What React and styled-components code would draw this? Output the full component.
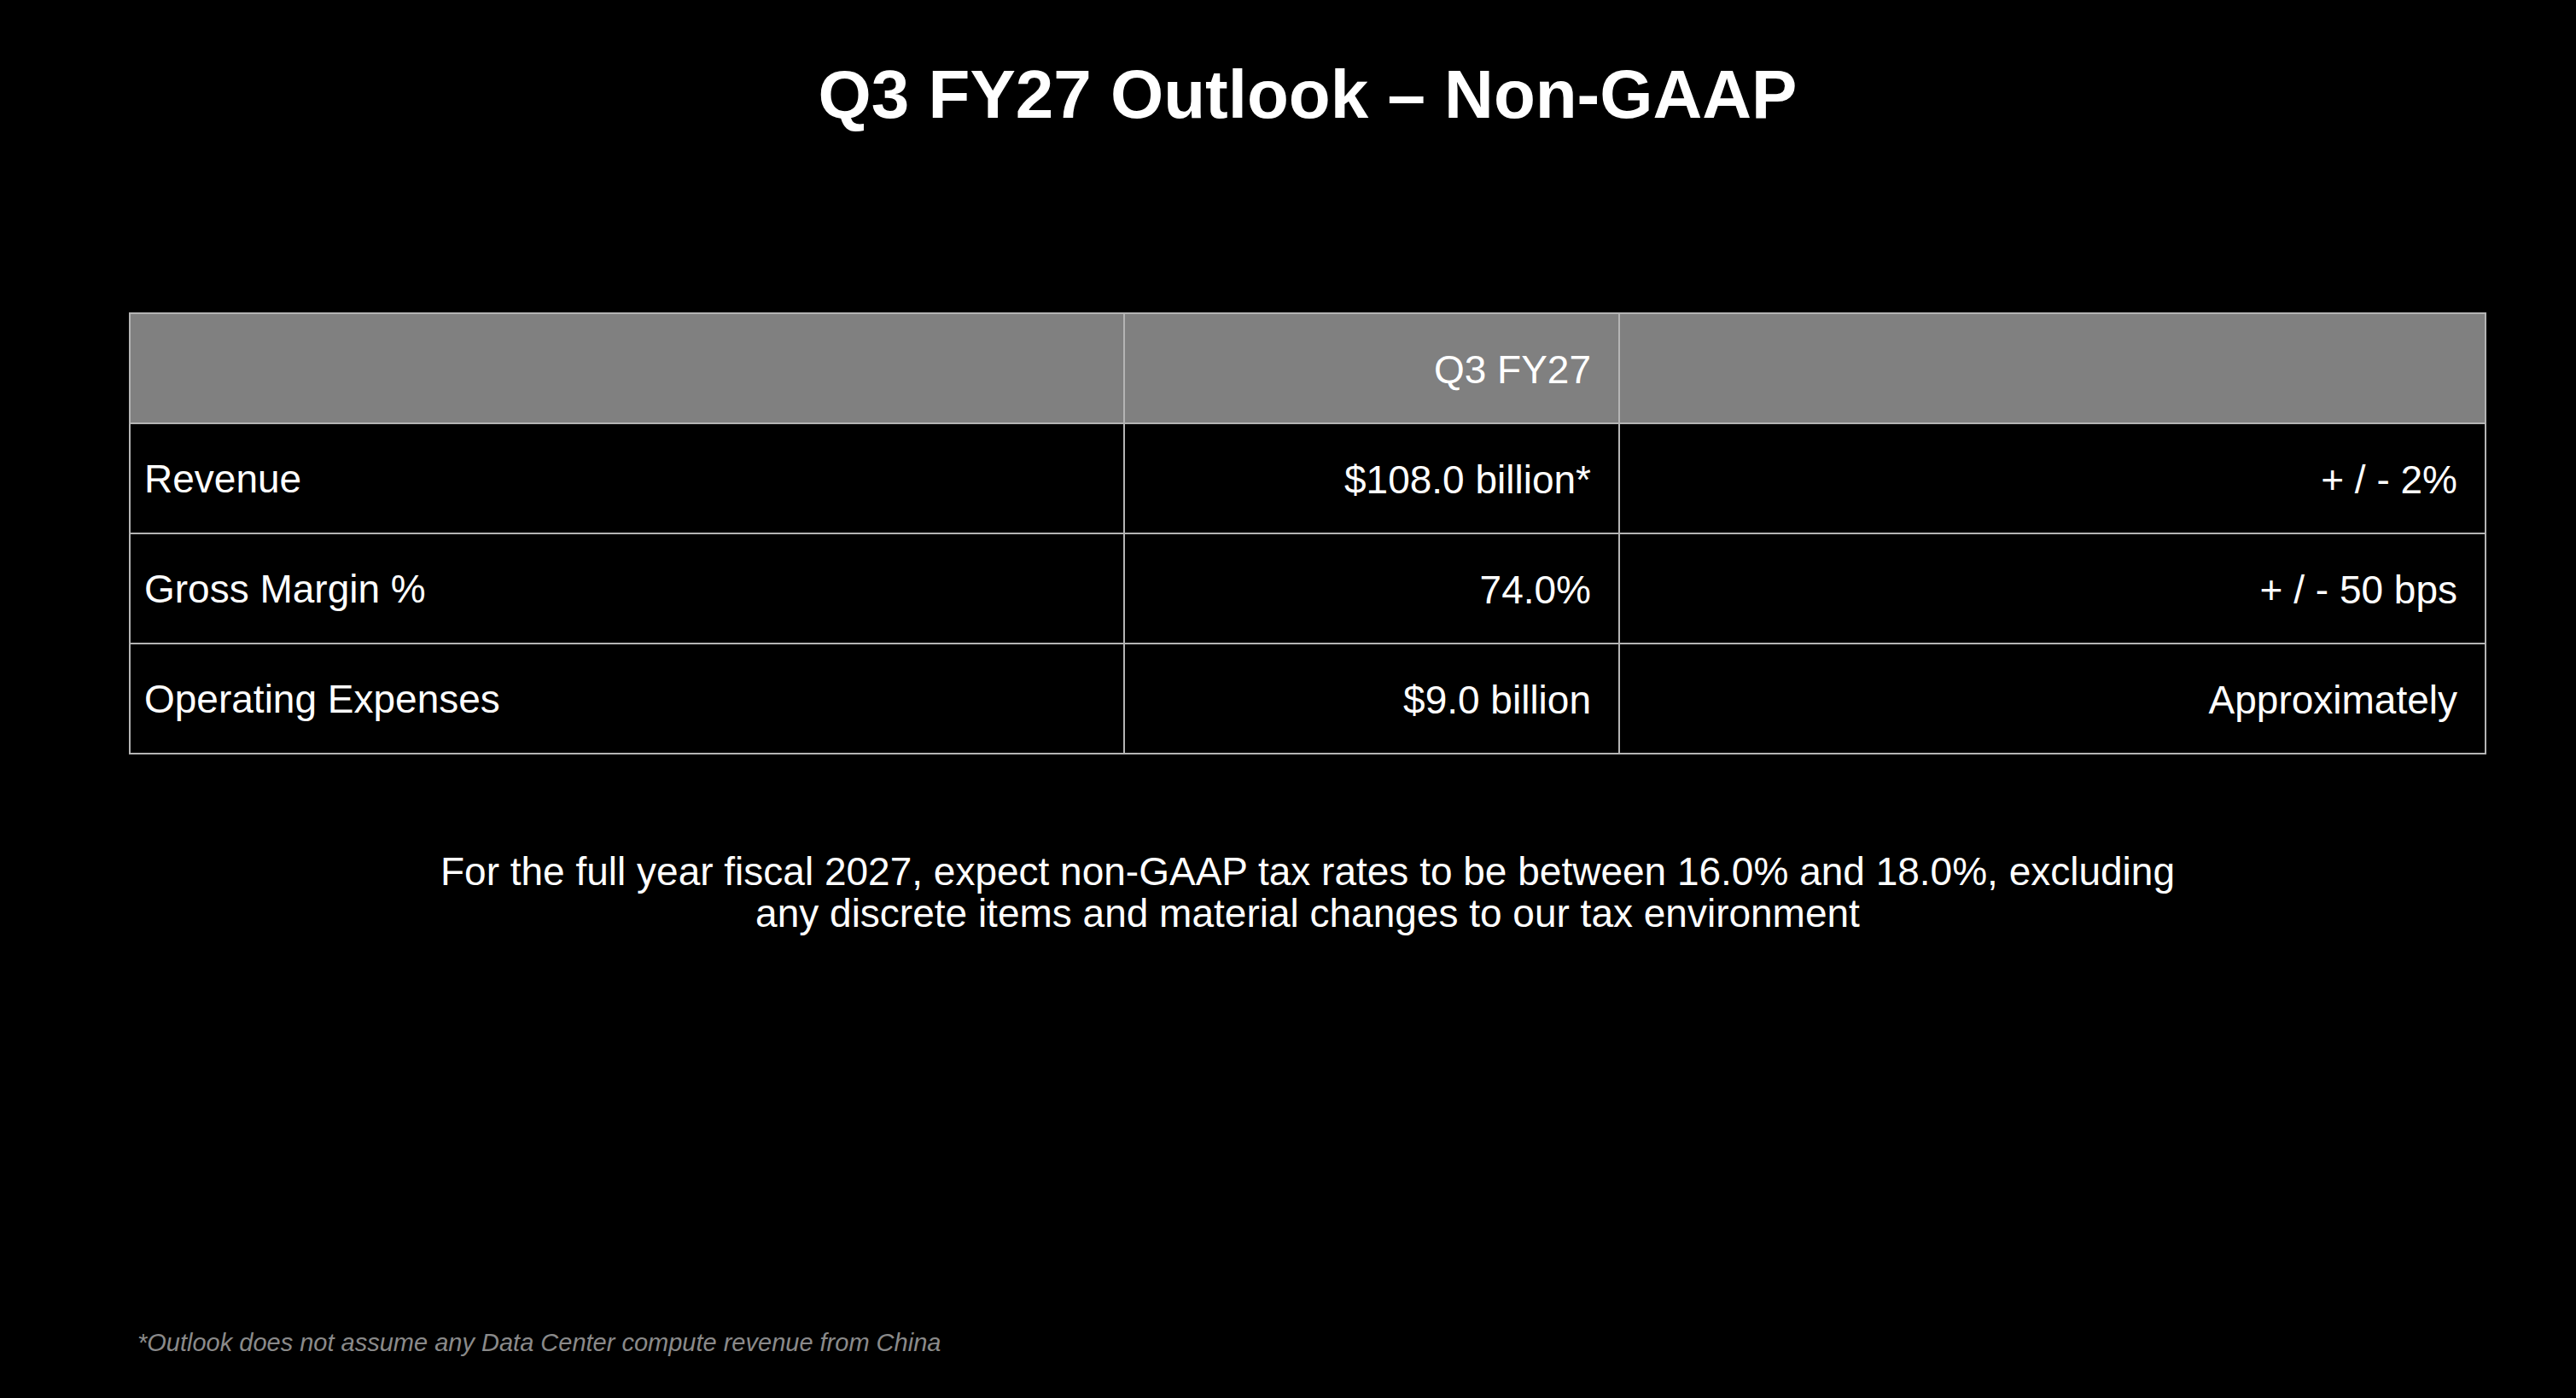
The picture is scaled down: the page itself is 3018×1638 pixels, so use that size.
import styled, { createGlobalStyle } from 'styled-components';

const Global = createGlobalStyle`
  html, body {
    margin: 0;
    padding: 0;
    background: #000;
  }
  body {
    font-family: "Liberation Sans", Arial, sans-serif;
    color: #fff;
  }
`;

const Slide = styled.div`
  width: 3018px;
  height: 1638px;
  box-sizing: border-box;
  padding: 64px 0 48px 151px;
  display: flex;
  flex-direction: column;
  background: #000;
`;

const Content = styled.div`
  width: 2762px;
  display: flex;
  flex-direction: column;
  flex: 1;
`;

const Title = styled.h1`
  margin: 0;
  font-size: 80px;
  font-weight: 700;
  line-height: 94px;
  text-align: center;
  color: #fff;
`;

const Grid = styled.div`
  margin-top: 208px;
  display: grid;
  grid-template-columns: 1163px 578px 1013px;
  grid-auto-rows: 127px;
  gap: 2px;
  padding: 2px;
  background: #b4b4b4;
`;

const Cell = styled.div`
  display: flex;
  align-items: center;
  justify-content: ${(p) => (p.$right ? 'flex-end' : 'flex-start')};
  padding: ${(p) => (p.$right ? '3px 32px 0 0' : '0 0 0 16px')};
  background: ${(p) => (p.$head ? '#808080' : '#000')};
  font-size: 46px;
  color: #fff;
  white-space: nowrap;
`;

const Note = styled.p`
  margin: 113px 0 0;
  font-size: 46px;
  line-height: 49px;
  text-align: center;
  color: #fff;
`;

const Footnote = styled.p`
  margin: auto 0 0;
  padding-left: 10px;
  font-size: 29px;
  font-style: italic;
  line-height: 34px;
  color: #8a8a8a;
`;

const rows = [
  ['Revenue', '$108.0 billion*', '+ / - 2%'],
  ['Gross Margin %', '74.0%', '+ / - 50 bps'],
  ['Operating Expenses', '$9.0 billion', 'Approximately'],
];

export default function App() {
  return (
    <>
      <Global />
      <Slide>
        <Content>
          <Title>Q3 FY27 Outlook – Non-GAAP</Title>
          <Grid>
            <Cell $head />
            <Cell $head $right>Q3 FY27</Cell>
            <Cell $head />
            {rows.map((r) => (
              <>
                <Cell key={r[0]}>{r[0]}</Cell>
                <Cell $right>{r[1]}</Cell>
                <Cell $right>{r[2]}</Cell>
              </>
            ))}
          </Grid>
          <Note>
            For the full year fiscal 2027, expect non-GAAP tax rates to be between 16.0% and 18.0%, excluding
            <br />
            any discrete items and material changes to our tax environment
          </Note>
          <Footnote>*Outlook does not assume any Data Center compute revenue from China</Footnote>
        </Content>
      </Slide>
    </>
  );
}
